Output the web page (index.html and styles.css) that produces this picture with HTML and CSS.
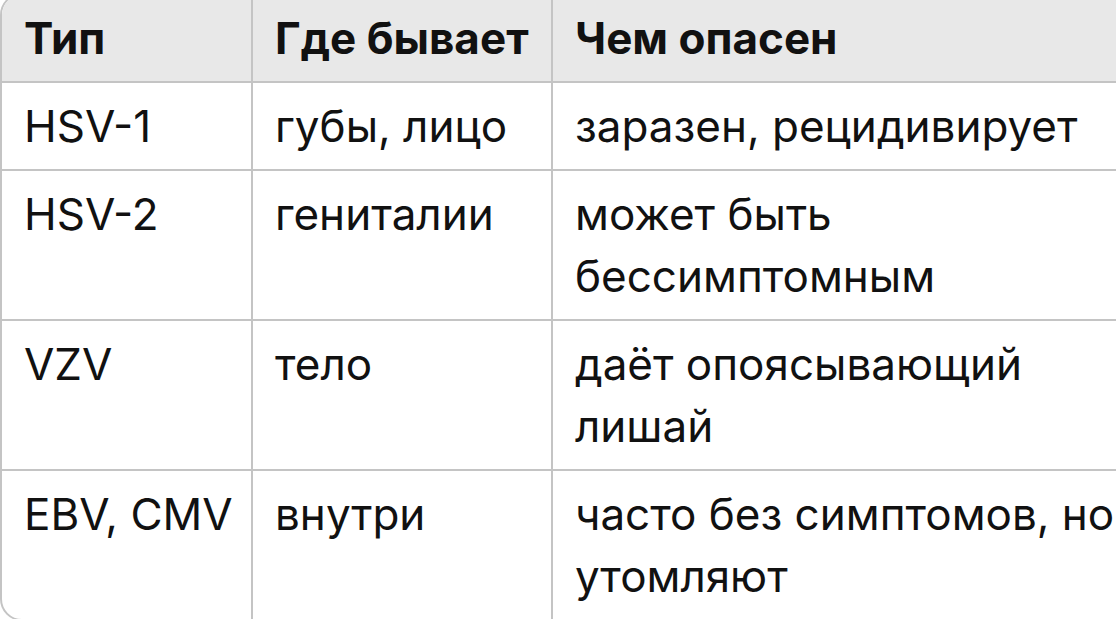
FILE: index.html
```html
<!DOCTYPE html>
<html lang="ru">
<head>
<meta charset="utf-8">
<title>Вирусы герпеса</title>
<link rel="stylesheet" href="styles.css">
</head>
<body>
<div class="table-wrap">
  <table class="herpes">
    <colgroup>
      <col class="c1">
      <col class="c2">
      <col class="c3">
    </colgroup>
    <thead>
      <tr><th>Тип</th><th>Где бывает</th><th>Чем опасен</th></tr>
    </thead>
    <tbody>
      <tr><td>HSV-1</td><td>губы, лицо</td><td>заразен, рецидивирует</td></tr>
      <tr><td>HSV-2</td><td>гениталии</td><td>может быть бессимптомным</td></tr>
      <tr><td>VZV</td><td>тело</td><td>даёт опоясывающий лишай</td></tr>
      <tr><td>EBV, CMV</td><td>внутри</td><td>часто без симптомов, но утомляют</td></tr>
    </tbody>
  </table>
</div>
</body>
</html>
```

FILE: styles.css
```css
html, body {
  margin: 0;
  padding: 0;
  background: #ffffff;
  overflow: hidden;
}

body {
  font-family: Inter, "Noto Sans", sans-serif;
  color: #111111;
}

.table-wrap {
  margin-top: -7px;
  width: 1139px;
  border: 2px solid #c4c4c4;
  border-radius: 22px;
  overflow: hidden;
}

.herpes {
  width: 100%;
  border-collapse: collapse;
  table-layout: fixed;
  font-size: 44px;
  line-height: 62px;
}

.c1 { width: 250px; }
.c2 { width: 300px; }

.herpes th,
.herpes td {
  text-align: left;
  vertical-align: top;
  padding: 12px 14px 12px 22px;
  border-right: 2px solid #c4c4c4;
  border-bottom: 2px solid #c4c4c4;
}

.herpes th:first-child,
.herpes td:first-child {
  white-space: nowrap;
}

.herpes th:last-child,
.herpes td:last-child {
  border-right: none;
}

.herpes tbody tr:last-child td {
  border-bottom: none;
}

.herpes th {
  background: #e8e8e8;
  font-weight: 650;
}
```
